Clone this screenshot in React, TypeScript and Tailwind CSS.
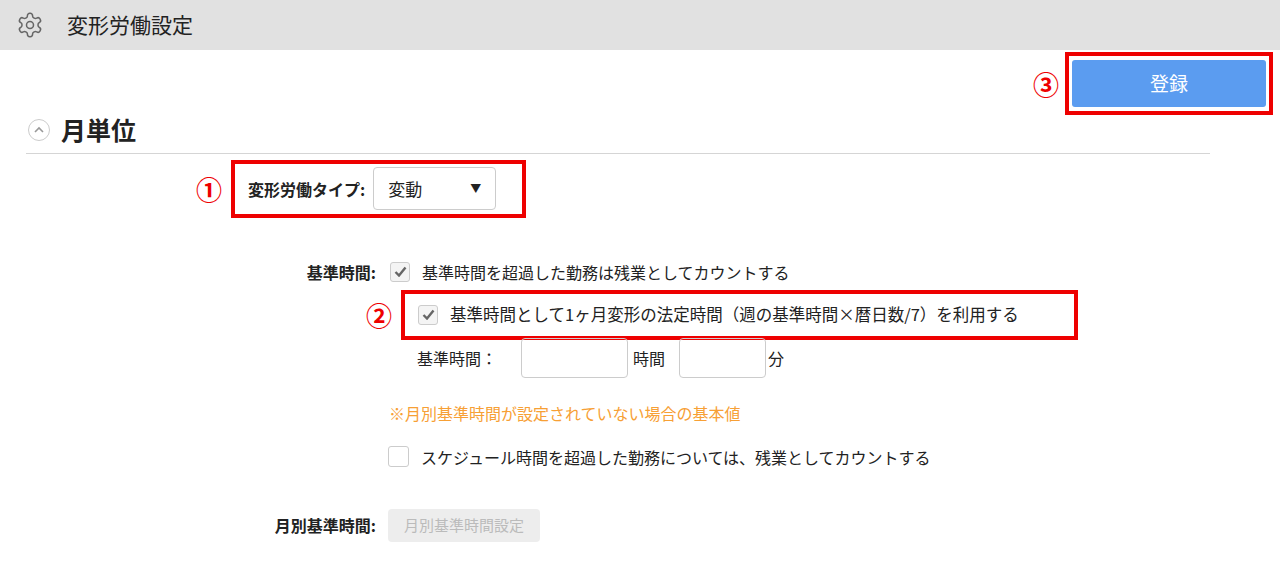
import React from "react";

const F = { fontFamily: '"Noto Sans CJK JP", "Noto Sans", sans-serif' };

function Check({ checked }: { checked?: boolean }) {
  return (
    <span className="flex h-[20px] w-[20px] items-center justify-center rounded-[3px] border border-[#ccc] bg-[#f4f4f4]">
      {checked && (
        <svg width="13" height="11" viewBox="0 0 13 11"><path d="M1.5 6 L5 9.5 L11.5 1.5" stroke="#666" strokeWidth="2.4" fill="none" /></svg>
      )}
    </span>
  );
}

function Num({ n }: { n: string }) {
  return <span className="text-[26px] font-bold leading-none text-[#e00]">{n}</span>;
}

export default function App() {
  return (
    <div style={F} className="h-[566px] w-[1280px] bg-white text-[#222]">
      <div className="flex h-[50px] items-center bg-[#e1e1e1] pl-[16px]">
        <svg width="28" height="28" viewBox="0 0 24 24" fill="none" stroke="#666" strokeWidth="1.3">
          <path d="M12.22 2h-.44a2 2 0 0 0-2 2v.18a2 2 0 0 1-1 1.73l-.43.25a2 2 0 0 1-2 0l-.15-.08a2 2 0 0 0-2.73.73l-.22.38a2 2 0 0 0 .73 2.73l.15.1a2 2 0 0 1 1 1.72v.51a2 2 0 0 1-1 1.74l-.15.09a2 2 0 0 0-.73 2.73l.22.38a2 2 0 0 0 2.730.73l.15-.08a2 2 0 0 1 2 0l.43.25a2 2 0 0 1 1 1.73V20a2 2 0 0 0 2 2h.44a2 2 0 0 0 2-2v-.18a2 2 0 0 1 1-1.73l.43-.25a2 2 0 0 1 2 0l.15.08a2 2 0 0 0 2.73-.73l.22-.39a2 2 0 0 0-.73-2.73l-.15-.08a2 2 0 0 1-1-1.74v-.5a2 2 0 0 1 1-1.74l.15-.09a2 2 0 0 0 .73-2.73l-.22-.38a2 2 0 0 0-2.73-.73l-.15.08a2 2 0 0 1-2 0l-.43-.25a2 2 0 0 1-1-1.73V4a2 2 0 0 0-2-2z" />
          <circle cx="12" cy="12" r="3" />
        </svg>
        <span className="ml-[23px] text-[21px]">変形労働設定</span>
      </div>

      <div className="flex justify-end pr-[7px] pt-[2px]">
        <div className="flex items-center gap-[6px]">
          <Num n="③" />
          <div className="border-[4px] border-[#e00] px-[3px] py-[4px]">
            <button className="h-[47px] w-[194px] rounded-[3px] bg-[#5b9cf0] text-[19px] text-white">登録</button>
          </div>
        </div>
      </div>

      <div className="mx-[26px] mr-[70px] mt-[-4px] flex items-center border-b border-[#d5d5d5] pb-[4px]">
        <span className="ml-[2px] flex h-[22px] w-[22px] items-center justify-center rounded-full border border-[#ccc]">
          <svg width="10" height="7" viewBox="0 0 10 7"><path d="M1 6 L5 2 L9 6" stroke="#999" strokeWidth="1.6" fill="none" /></svg>
        </span>
        <span className="ml-[11px] text-[25px] font-bold">月単位</span>
      </div>

      <div className="ml-[196px] mt-[6px] flex items-center gap-[9px]">
        <Num n="①" />
        <div className="flex h-[58px] w-[295px] items-center border-[4px] border-[#e00] pl-[13px]">
          <span className="text-[16px] font-bold">変形労働タイプ:</span>
          <div className="ml-[8px] flex h-[43px] w-[123px] items-center justify-between rounded-[4px] border border-[#ccc] px-[14px] text-[17px]">
            変動<span className="text-[11px]">▼</span>
          </div>
        </div>
      </div>

      <div className="mt-[42px] flex items-center">
        <span className="w-[376px] text-right text-[16px] font-bold">基準時間:</span>
        <span className="ml-[14px]"><Check checked /></span>
        <span className="ml-[12px] text-[16px]">基準時間を超過した勤務は残業としてカウントする</span>
      </div>

      <div className="ml-[366px] mt-[6px] flex items-center gap-[9px]">
        <Num n="②" />
        <div className="flex h-[50px] w-[677px] items-center border-[4px] border-[#e00] pl-[13px]">
          <Check checked />
          <span className="ml-[12px] text-[16.5px]">基準時間として1ヶ月変形の法定時間（週の基準時間×暦日数/7）を利用する</span>
        </div>
      </div>

      <div className="ml-[417px] mt-[-2px] flex items-center text-[16px]">
        <span className="w-[104px]">基準時間：</span>
        <span className="h-[40px] w-[107px] rounded-[4px] border border-[#ccc]" />
        <span className="ml-[5px] w-[46px]">時間</span>
        <span className="h-[40px] w-[87px] rounded-[4px] border border-[#ccc]" />
        <span className="ml-[2px]">分</span>
      </div>

      <div className="ml-[389px] mt-[23px] text-[16px] text-[#f7a035]">※月別基準時間が設定されていない場合の基本値</div>

      <div className="ml-[388px] mt-[20px] flex items-center">
        <span className="h-[21px] w-[21px] rounded-[3px] border border-[#ccc] bg-white" />
        <span className="ml-[12px] text-[16px]">スケジュール時間を超過した勤務については、残業としてカウントする</span>
      </div>

      <div className="mt-[40px] flex items-center">
        <span className="w-[376px] text-right text-[16px] font-bold">月別基準時間:</span>
        <span className="ml-[12px] flex h-[33px] w-[152px] items-center justify-center rounded-[4px] bg-[#ededed] text-[15px] text-[#bbb]">月別基準時間設定</span>
      </div>
    </div>
  );
}
